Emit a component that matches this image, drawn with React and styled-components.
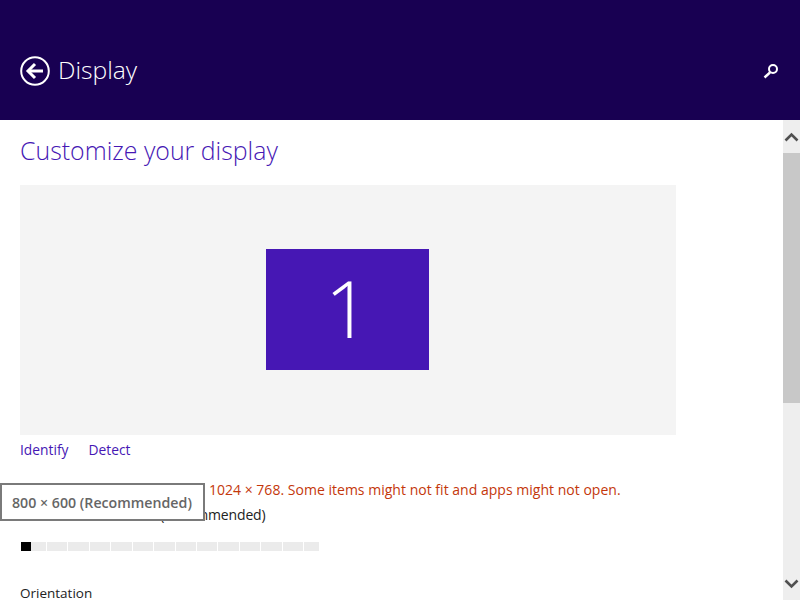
import styled, { createGlobalStyle } from "styled-components"

const GlobalStyle = createGlobalStyle`
  html, body {
    margin: 0;
    padding: 0;
    background: #fff;
    overflow: hidden;
  }
`

const ticks = Array.from({ length: 12 }, (_, i) => i)

export default function App() {
  return (
    <Page>
      <GlobalStyle />
      <Header>
        <BackTitle>
          <svg width="30" height="30" viewBox="0 0 30 30" fill="none" stroke="#fff">
            <circle cx="15" cy="15" r="13.8" strokeWidth="2" />
            <path d="M23 15H9" strokeWidth="3" />
            <path d="M15 8l-7 7 7 7" strokeWidth="3" />
          </svg>
          <Title>Display</Title>
        </BackTitle>
        <svg width="16" height="16" viewBox="0 0 16 16" fill="none" stroke="#fff">
          <circle cx="10" cy="6" r="4" strokeWidth="2" />
          <path d="M7 9.500L1.500 14.500" strokeWidth="2.400" />
        </svg>
      </Header>

      <Body>
        <Content>
          <Heading>Customize your display</Heading>
          <Preview>
            <Monitor>1</Monitor>
          </Preview>
          <Links>
            <LinkText>Identify</LinkText>
            <LinkText>Detect</LinkText>
          </Links>
          <Warning>
            <WarningStart>Your resolution is lower than </WarningStart>
            1024 × 768. Some items might not fit and apps might not open.
          </Warning>
          <Label>Resolution: 800 × 600 (Recommended)</Label>
          <Slider>
            <Thumb />
            <Tick $width={15} />
            {ticks.map((t) => (
              <Tick key={t} />
            ))}
            <Tick $width={15} />
          </Slider>
          <Orientation>Orientation</Orientation>
          <Tooltip>800 × 600 (Recommended)</Tooltip>
        </Content>

        <Scrollbar>
          <ArrowButton>
            <svg width="15" height="10" viewBox="0 0 15 10" fill="none" stroke="#505050" strokeWidth="2.600">
              <path d="M1.500 8.500l6-6 6 6" />
            </svg>
          </ArrowButton>
          <ScrollThumb />
          <ScrollTrack />
          <ArrowButton>
            <svg width="15" height="10" viewBox="0 0 15 10" fill="none" stroke="#505050" strokeWidth="2.600">
              <path d="M1.500 1.500l6 6 6-6" />
            </svg>
          </ArrowButton>
        </Scrollbar>
      </Body>
    </Page>
  )
}

const Page = styled.div`
  width: 800px;
  height: 600px;
  display: flex;
  flex-direction: column;
  overflow: hidden;
  font-family: "Open Sans", sans-serif;
`
const Header = styled.header`
  height: 120px;
  flex: none;
  box-sizing: border-box;
  background: #180052;
  display: flex;
  align-items: center;
  justify-content: space-between;
  padding: 22px 21px 0 20px;
`
const BackTitle = styled.div`
  display: flex;
  align-items: center;
  gap: 8px;
`
const Title = styled.h1`
  margin: -2px 0 0;
  font-size: 24.700px;
  line-height: 30px;
  font-weight: 300;
  color: #fff;
`
const Body = styled.div`
  flex: 1;
  min-height: 0;
  display: flex;
`
const Content = styled.main`
  position: relative;
  flex: 1;
  min-width: 0;
  overflow: hidden;
  padding: 13px 0 0 20px;
`
const Heading = styled.h2`
  margin: 0 0 18px;
  font-size: 24.900px;
  line-height: 34px;
  font-weight: 300;
  color: #4617b4;
`
const Preview = styled.div`
  width: 656px;
  height: 250px;
  box-sizing: border-box;
  padding: 0 1px 1px 0;
  background: #f4f4f4;
  display: flex;
  align-items: center;
  justify-content: center;
`
const Monitor = styled.div`
  width: 163px;
  height: 121px;
  background: #4617b4;
  color: #fff;
  font-size: 80px;
  font-weight: 300;
  line-height: 115px;
  text-align: center;
`
const Links = styled.div`
  display: flex;
  gap: 20px;
  margin-top: 5px;
`
const LinkText = styled.span`
  font-size: 13.800px;
  line-height: 20px;
  color: #4617b4;
`
const Warning = styled.p`
  margin: 20px 0 0;
  font-size: 14px;
  line-height: 20px;
  letter-spacing: 0.020px;
  color: #c4370b;
  white-space: nowrap;
`
const WarningStart = styled.span`
  letter-spacing: -0.090px;
`
const Label = styled.p`
  margin: 5px 0 0;
  font-size: 14px;
  line-height: 20px;
  letter-spacing: -0.150px;
  color: #222;
  white-space: nowrap;
`
const Slider = styled.div`
  display: flex;
  gap: 1px;
  width: 298px;
  height: 9px;
  margin: 17px 0 0 1px;
`
const Thumb = styled.div`
  width: 10px;
  flex: none;
  margin-right: -1px;
  background: #000;
`
const Tick = styled.div`
  flex: ${(p) => (p.$width ? `0 0 ${p.$width}px` : "1")};
  background: #ebebeb;
`
const Orientation = styled.p`
  margin: 32px 0 0;
  font-size: 13.500px;
  line-height: 20px;
  color: #222;
`
const Tooltip = styled.div`
  position: absolute;
  left: 0;
  top: 363px;
  width: 205px;
  height: 38px;
  box-sizing: border-box;
  border: 2px solid #7a7a7a;
  background: #fff;
  color: #666;
  font-size: 14.200px;
  font-weight: 600;
  line-height: 35px;
  padding-left: 10px;
  white-space: nowrap;
`
const Scrollbar = styled.aside`
  width: 17px;
  flex: none;
  display: flex;
  flex-direction: column;
  background: #eee;
`
const ArrowButton = styled.div`
  height: 33px;
  flex: none;
  display: flex;
  align-items: center;
  justify-content: center;
`
const ScrollThumb = styled.div`
  height: 250px;
  flex: none;
  background: #c8c8c8;
`
const ScrollTrack = styled.div`
  flex: 1;
`
